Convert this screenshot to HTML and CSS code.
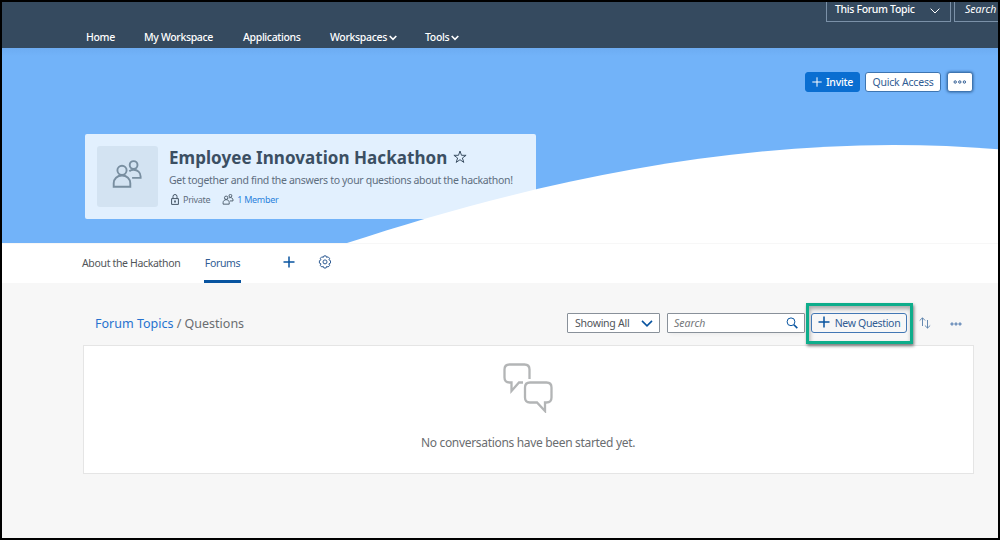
FILE: index.html
```html
<!DOCTYPE html>
<html lang="en">
<head>
<meta charset="utf-8">
<title>Employee Innovation Hackathon</title>
<link rel="stylesheet" href="styles.css">
</head>
<body>
<div class="app">
  <header class="topbar">
    <div class="topbar-search">
      <div class="scope"><span>This Forum Topic</span><svg width="10" height="6" viewBox="0 0 10 6"><path d="M.6.6 5 5 9.400.6"/></svg></div>
      <div class="global-search">Search</div>
    </div>
    <nav class="nav">
      <a class="n-home">Home</a>
      <a class="n-my">My Workspace</a>
      <a class="n-apps">Applications</a>
      <a class="n-ws"><span>Workspaces</span><svg width="8" height="6" viewBox="0 0 8 6"><path d="M.7 1 4 4.400 7.300 1"/></svg></a>
      <a class="n-tools"><span>Tools</span><svg width="8" height="6" viewBox="0 0 8 6"><path d="M.7 1 4 4.400 7.300 1"/></svg></a>
    </nav>
  </header>
  <section class="hero">
    <div class="actions">
      <button class="btn primary"><svg width="10" height="10" viewBox="0 0 10 10"><path d="M5 .3v9.400M.3 5h9.400"/></svg><span>Invite</span></button>
      <button class="btn quick"><span>Quick Access</span></button>
      <button class="btn more"><svg width="14" height="4" viewBox="0 0 14 4"><circle cx="2.200" cy="2" r="1.200"/><circle cx="6.800" cy="2" r="1.200"/><circle cx="11.400" cy="2" r="1.200"/></svg></button>
    </div>
    <div class="workspace">
      <div class="avatar"><svg width="30" height="30" viewBox="0 0 30 30"><circle cx="10" cy="10.300" r="4.600"/><path d="M1.700 26.700v-3.400c0-4.500 3.500-7.800 8.300-7.800s8.300 3.300 8.300 7.800v3.400z"/><circle cx="21.600" cy="5" r="3.900"/><path d="M17.300 11.300c1.200-1 2.700-1.500 4.300-1.500 4 0 7 2.800 7 6.600v1.500h-8.500"/></svg></div>
      <div class="info">
        <h1><span>Employee Innovation Hackathon</span><svg width="14" height="14" viewBox="0 0 14 14"><path d="M7 1 8.500 5.300h4.600L9.400 8l1.400 4.400L7 9.700l-3.800 2.700L4.600 8 .9 5.300h4.600z"/></svg></h1>
        <p class="desc"><span>Get together and find the answers to your questions about the hackathon!</span></p>
        <div class="meta">
          <svg width="8" height="11" viewBox="0 0 8 11"><path d="M.6 4.600h6.800v5.800H.6zM2 4.600V2.500a2 2 0 0 1 4 0v2.100"/><path d="M4 6.500v2" stroke-width="1.700"/></svg>
          <span class="private">Private</span>
          <svg class="people" width="12" height="11" viewBox="0 0 30 30"><circle cx="10" cy="10.300" r="4.600"/><path d="M1.700 27.700v-4.400c0-4.500 3.500-7.800 8.300-7.800s8.300 3.300 8.300 7.800v4.400z"/><circle cx="21.600" cy="5" r="3.900"/><path d="M17.300 11.300c1.200-1 2.700-1.500 4.300-1.500 4 0 7 2.800 7 6.600v2.500h-8.500"/></svg>
          <a class="member">1 Member</a>
        </div>
      </div>
    </div>
    <svg class="wave" width="996" height="195" viewBox="2 48 996 195"><path d="M347 243C517 187 703 145 893 145Q947 145 998 149.300V243z"/></svg>
  </section>
  <nav class="tabs">
    <a class="tab about"><span>About the Hackathon</span></a>
    <a class="tab active"><span>Forums</span></a>
    <svg class="add" width="12" height="12" viewBox="0 0 12 12"><path d="M6 .5v11M.5 6h11"/></svg>
    <svg class="gear" width="14" height="14" viewBox="0 0 14 14"><path d="M5.900.9h2.200l.5 1.500 1.500-.6 1.500 1.500-.7 1.500 1.600.9v2.400l-1.600.8.7 1.600-1.500 1.500-1.500-.6-.5 1.600H5.900l-.6-1.600-1.500.6-1.500-1.500.7-1.600L1.400 8.100V5.700L3 4.800l-.7-1.500 1.500-1.500 1.500.6z" stroke-linejoin="round"/><circle cx="7" cy="6.900" r="2"/></svg>
  </nav>
  <main class="content">
    <div class="toolbar">
      <div class="crumbs"><a>Forum Topics</a><span> / Questions</span></div>
      <div class="filter"><span>Showing All</span><svg width="12" height="7" viewBox="0 0 12 7"><path d="M1 .9 6 5.800 11 .9"/></svg></div>
      <div class="search"><span>Search</span><svg width="12" height="12" viewBox="0 0 12 12"><circle cx="5" cy="4.800" r="3.900"/><path d="m7.900 7.700 3.400 3.400" stroke-width="1.600"/></svg></div>
      <div class="highlight"><button class="question"><svg width="12" height="12" viewBox="0 0 12 12"><path d="M6 .5v11M.5 6h11"/></svg><span>New Question</span></button></div>
      <svg class="sort" width="12" height="12" viewBox="0 0 12 12"><path d="M3.500 9V1M.7 3.500 3.500.8l2.600 2.700M8.500 3v8M5.900 8.500l2.600 2.600 2.700-2.600"/></svg>
      <svg class="dots" width="12" height="4" viewBox="0 0 12 4"><circle cx="2" cy="2" r="1.100"/><circle cx="6" cy="2" r="1.100"/><circle cx="10" cy="2" r="1.100"/></svg>
    </div>
    <section class="empty">
      <svg width="50" height="50" viewBox="0 0 50 50"><path d="M20 19.500h-4L8.500 28v-8.500H6.500q-5 0-5-5v-8q0-5 5-5h15q5 0 5 5V16M27 19.500h16.500q5 0 5 5v10q0 5-5 5h-1.500v8.500l-8-8.500h-7q-5 0-5-5v-10q0-5 5-5z"/></svg>
      <p><span>No conversations have been started yet.</span></p>
    </section>
  </main>
</div>
</body>
</html>
```
FILE: styles.css
```css
* { box-sizing: border-box; }
body { margin: 0; font-family: "Noto Sans", sans-serif; font-size: 10.5px; letter-spacing: -.34px; }
svg { fill: none; stroke: currentColor; flex: none; display: block; }
button { font: inherit; padding: 0; letter-spacing: inherit; }
span, a { white-space: nowrap; }
.app { width: 1000px; height: 540px; border: 2px solid #000; background: #f7f7f7; overflow: hidden; }

.topbar { height: 46px; background: #354a5f; color: #fff; overflow: hidden; }
.topbar-search { display: flex; justify-content: flex-end; gap: 3px; margin-right: -30px; margin-top: -5px; height: 25px; }
.scope { width: 125px; border: 1px solid #7b91a8; display: flex; align-items: center; justify-content: space-between; padding: 0 10px 2px 8px; font-weight: 500; }
.scope svg { margin-top: 5px; }
.global-search { width: 74px; border: 1px solid #7b91a8; padding: 4px 10px; font-style: italic; line-height: 14px; letter-spacing: 0; }
.nav { display: flex; padding-left: 84px; margin-top: 7px; line-height: 16px; font-weight: 500; }
.nav a { display: flex; align-items: center; flex: none; }
.nav svg { margin: 2px 0 0 2px; stroke-width: 1.600; }
.n-home { width: 58px; }
.n-my { width: 99px; }
.n-apps { width: 87px; }
.n-ws { width: 95px; }

.hero { height: 195px; background: linear-gradient(#6dacf2, #72b3f9 8px); position: relative; }
.actions { display: flex; justify-content: flex-end; gap: 6px; padding: 24px 25px 0 0; }
.btn { height: 20px; border: 1px solid #3e75b1; border-radius: 3px; background: #fff; color: #315d94; display: flex; align-items: center; justify-content: center; }
.primary { width: 55px; background: #0a6ed1; border-color: #0a6ed1; color: #fff; gap: 4px; font-weight: 500; letter-spacing: -.25px; margin-right: -1px; }
.quick { width: 76px; letter-spacing: -.2px; }
.more { width: 26px; box-shadow: 0 0 3px #1d4c82; }
.workspace { margin: 42px 0 0 83px; width: 451px; height: 85px; border-radius: 2px; background: #e2f0fe; display: flex; padding: 12px; gap: 12px; }
.avatar { width: 61px; height: 61px; flex: none; border-radius: 3px; background: #d3e3f2; color: #788ea0; display: flex; align-items: center; justify-content: center; }
.avatar svg { stroke-width: 1.900; margin: -3px 0 0 -2px; }
.info { color: #5e6e7e; }
h1 { margin: -1px 0 0 -1px; height: 24px; display: flex; align-items: center; gap: 6px; font-size: 17px; font-weight: 700; color: #3b4f63; letter-spacing: .05px; }
h1 svg { stroke-width: 1; }
.desc { margin: 3px 0 0 -1px; line-height: 16px; letter-spacing: -.32px; }
.meta { display: flex; align-items: center; height: 14px; margin: 4px 0 0 1px; font-size: 9px; letter-spacing: -.3px; }
.meta svg { stroke: #465666; }
.private { margin-left: 4px; }
.meta .people { margin-left: 12px; stroke-width: 2.500; }
.member { margin-left: 3px; color: #2c82dc; }
.wave { position: absolute; left: 0; top: 0; fill: #fff; stroke: none; }

.tabs { height: 40px; background: #fff; border-top: 1px solid #f7f7f7; display: flex; align-items: center; padding-left: 80px; color: #515559; }
.tab { height: 39px; line-height: 39px; }
.about { width: 122px; }
.active { width: 37px; text-align: center; color: #315d94; border-bottom: 3px solid #0854a0; }
.add { color: #0854a0; margin: -4px 0 0 42px; stroke-width: 1.500; }
.gear { color: #315d94; margin: -4px 0 0 23px; stroke-width: 1; }

.content { padding: 20px 24px 0 81px; }
.toolbar { display: flex; height: 40px; align-items: center; }
.crumbs { width: 484px; padding-left: 12px; font-size: 12.500px; color: #6a6d70; letter-spacing: 0; }
.crumbs a { color: #2672cf; }
.filter, .search { height: 20px; border: 1px solid #89919a; border-radius: 1px; background: #fff; color: #515559; display: flex; align-items: center; justify-content: space-between; flex: none; }
.filter { width: 93px; padding: 0 6px 0 7px; letter-spacing: -.25px; }
.filter svg { color: #0854a0; stroke-width: 1.600; }
.search { width: 138px; margin-left: 7px; padding: 0 6px; font-style: italic; color: #74777a; box-shadow: 0 5px 3px -3px #eee; letter-spacing: 0; }
.search svg { color: #0854a0; stroke-width: 1; }
.highlight { width: 107px; height: 41px; border: 3px solid #0ead8b; flex: none; margin-left: 1px; padding: 7px 2px; background: #f7f7f7; box-shadow: 1px 2px 3px #777, inset 1px 3px 4px #aaa; position: relative; }
.question { width: 96px; height: 20px; border: 1px solid #4277b4; border-radius: 3px; background: #f7f7f7; color: #315d94; display: flex; align-items: center; justify-content: center; gap: 5px; }
.question svg { color: #0854a0; stroke-width: 1.500; margin-top: -2px; }
.sort { color: #567da8; margin-left: 6px; stroke-width: .9; }
.dots { color: #426fa8; margin-left: 19px; margin-top: 2px; stroke-width: 1; }
.empty { height: 129px; margin-top: 2px; background: #fff; border: 1px solid #e5e5e5; display: flex; flex-direction: column; align-items: center; }
.empty svg { color: #b3b5b6; stroke-width: 2.300; margin: 17px 0 0 -1px; }
.empty p { margin: 21px 0 0 -1px; line-height: 18px; font-size: 12px; letter-spacing: -.32px; color: #6a6d70; }
```
